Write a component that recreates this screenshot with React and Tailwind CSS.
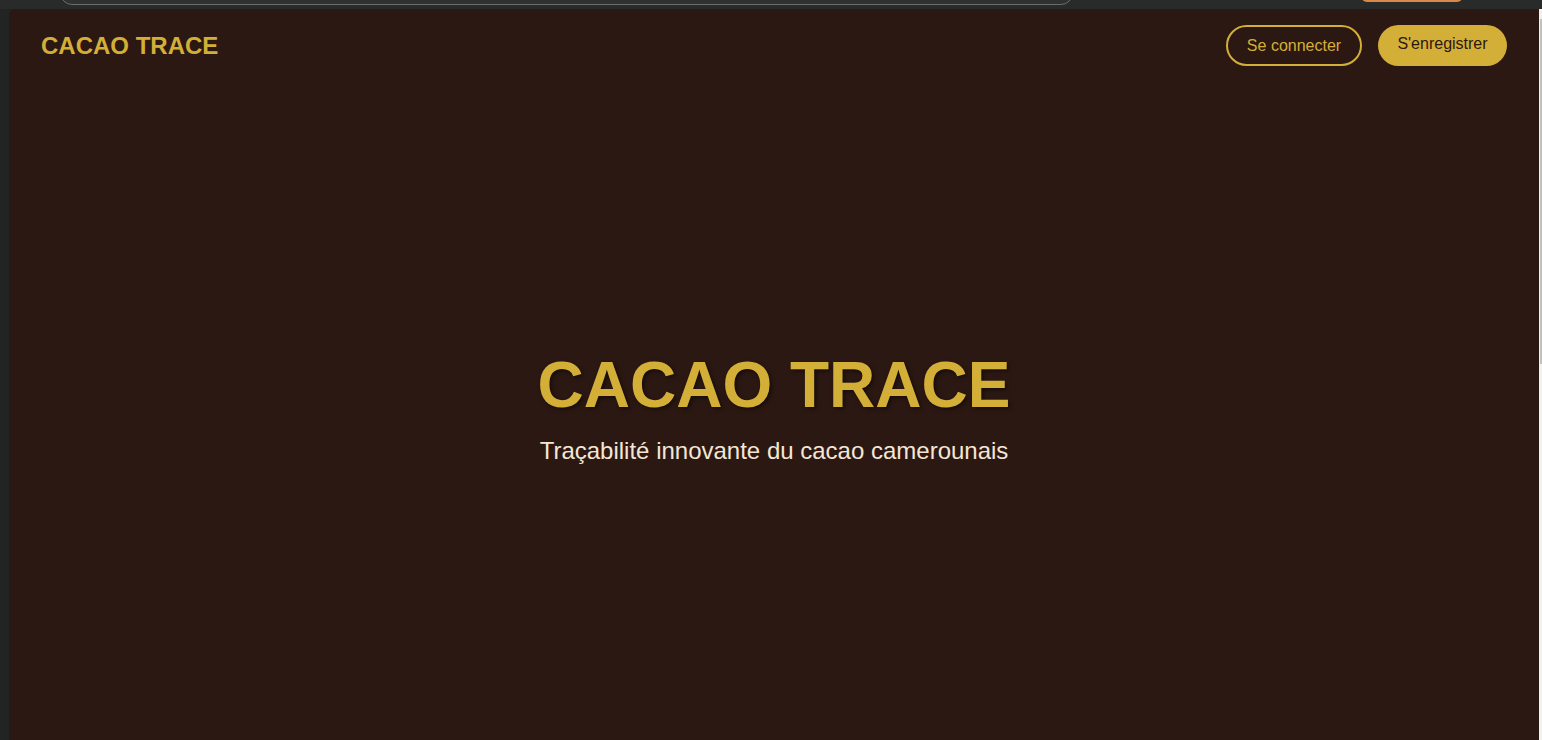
export default function App() {
  return (
    <div
      className="h-[740px] w-full overflow-hidden bg-[#222424] flex flex-col"
      style={{ fontFamily: '"Liberation Sans", Arial, sans-serif' }}
    >
      {/* browser chrome strip */}
      <div className="relative h-[9px] shrink-0 bg-[#292b2b]">
        <div className="absolute left-[60px] top-[-20px] h-[25px] w-[1013px] rounded-b-[12px] border border-[#6b6e6e] bg-[#2f3131]" />
        <div className="absolute left-[1361px] top-[-20px] h-[22px] w-[102px] rounded-b-[6px] border-2 border-[#d98a4a]" />
      </div>

      <div className="flex flex-1 min-h-0">
        <div className="w-[9px] shrink-0 bg-[#222424]" />

        <main className="flex flex-1 flex-col rounded-tl-[6px] bg-[#2c1813]">
          <header className="flex items-center justify-between px-8 py-4">
            <h1 className="text-2xl font-bold text-[#d4af37]">CACAO TRACE</h1>
            <div className="flex items-center gap-4">
              <button className="flex h-[41px] w-[136px] items-center justify-center rounded-full border-2 border-[#d4af37] text-base text-[#d4af37]">
                Se connecter
              </button>
              <button className="flex h-[41px] w-[129px] items-center justify-center rounded-full bg-[#d4af37] pb-1 text-base text-[#2c1813]">
                S'enregistrer
              </button>
            </div>
          </header>

          <section className="flex flex-1 flex-col items-center justify-center pb-[3px]">
            <h2 className="text-[64px] leading-none font-bold text-[#d4af37] [text-shadow:2px_2px_4px_rgba(0,0,0,0.5)]">
              CACAO TRACE
            </h2>
            <p className="mt-[18px] text-2xl text-[#f5e6d3]">
              Traçabilité innovante du cacao camerounais
            </p>
          </section>
        </main>

        <div className="relative w-[3px] shrink-0 bg-[#f1f1f1]">
          <div className="absolute left-[1px] top-[10px] h-[345px] w-[2px] bg-[#c1c1c1]" />
        </div>
      </div>
    </div>
  );
}
